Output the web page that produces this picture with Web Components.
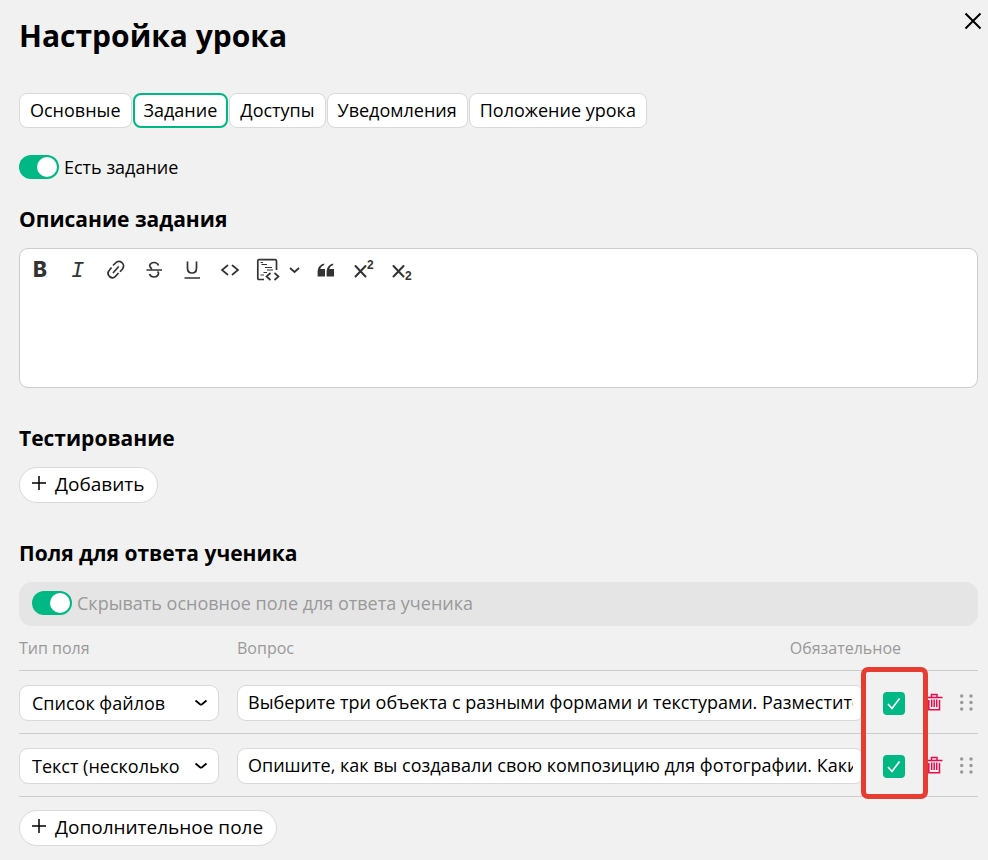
<!DOCTYPE html>
<html lang="ru">
  <head>
    <meta charset="UTF-8" />
    <meta name="viewport" content="width=device-width, initial-scale=1.0" />
    <title>Настройка урока</title>
    <style>
      :root {
        --green: #00b884;
        --border: #d9d9d9;
        --line: #cccccc;
        --muted: #999999;
        --danger: #eb0a4b;
      }
      body {
        margin: 0;
        background: #f1f1f1;
        color: #000;
        font: 18px/24px "Open Sans", "Noto Sans", sans-serif;
      }
    </style>
  </head>
  <body>
    <template id="lesson-settings">
      <style>
        :host {
          display: block;
          padding: 16px 10px 12px 19px;
        }
        header {
          display: flex;
          justify-content: space-between;
          align-items: flex-start;
        }
        h1 {
          margin: 0;
          font-size: 30px;
          line-height: 40px;
        }
        .close {
          margin: -4px -4px 0 0;
          padding: 0;
          width: 18px;
          height: 18px;
          border: 0;
          background: none;
          color: inherit;
        }
        .close svg {
          display: block;
        }
        lesson-tabs {
          margin-top: 37px;
        }
        .has-task {
          margin-top: 27px;
        }
        .more {
          margin-top: 13px;
        }
      </style>
      <header>
        <h1>Настройка урока</h1>
        <button class="close" type="button" aria-label="Закрыть">
          <svg width="18" height="18" viewBox="0 0 18 18" fill="none" stroke="currentColor" stroke-width="2">
            <path d="M1.5 1.5l15 15M16.5 1.5l-15 15" />
          </svg>
        </button>
      </header>
      <lesson-tabs active="1"></lesson-tabs>
      <toggle-switch class="has-task">Есть задание</toggle-switch>
      <form-section label="Описание задания">
        <text-editor></text-editor>
      </form-section>
      <form-section label="Тестирование" style="--space: 37px">
        <add-button>Добавить</add-button>
      </form-section>
      <form-section label="Поля для ответа ученика" style="--space: 37px">
        <toggle-switch panel>Скрывать основное поле для ответа ученика</toggle-switch>
        <answer-fields></answer-fields>
        <add-button class="more">Дополнительное поле</add-button>
      </form-section>
    </template>

    <template id="form-section">
      <style>
        :host {
          display: block;
          margin-top: var(--space, 27px);
        }
        h2 {
          margin: 0 0 16px;
          font-size: 21px;
          line-height: 26px;
        }
        ::slotted(.more) {
          margin-top: 13px;
        }
      </style>
      <h2></h2>
      <slot></slot>
    </template>

    <template id="lesson-tabs">
      <style>
        :host {
          display: block;
        }
        div {
          display: flex;
          flex-wrap: wrap;
          gap: 1px;
        }
        button {
          box-sizing: border-box;
          height: 35px;
          padding: 0 10px 1px;
          border: 1px solid var(--border);
          border-radius: 8px;
          background: #fff;
          color: inherit;
          font: inherit;
        }
        button[aria-selected="true"] {
          padding: 0 9px 1px;
          border: 2px solid var(--green);
        }
      </style>
      <div role="tablist"></div>
    </template>

    <template id="toggle-switch">
      <style>
        :host {
          display: flex;
        }
        :host([panel]) {
          padding: 9px 13px 11px;
          border-radius: 13px;
          background: #e5e5e5;
          color: var(--muted);
        }
        label {
          display: flex;
          align-items: center;
          gap: 5px;
        }
        input {
          appearance: none;
          box-sizing: border-box;
          display: flex;
          justify-content: flex-end;
          margin: 0;
          width: 40px;
          height: 24px;
          padding: 2px;
          border-radius: 12px;
          background: var(--green);
        }
        input::before {
          content: "";
          width: 20px;
          height: 20px;
          border-radius: 50%;
          background: #fff;
        }
        input:not(:checked) {
          justify-content: flex-start;
          background: #bbb;
        }
      </style>
      <label><input type="checkbox" role="switch" checked /><slot></slot></label>
    </template>

    <template id="text-editor">
      <style>
        :host {
          display: block;
          border: 1px solid var(--line);
          border-radius: 9px;
          background: #fff;
          color: #333;
        }
        .toolbar {
          display: flex;
          padding: 2px 1px 0;
        }
        button {
          display: flex;
          align-items: center;
          justify-content: center;
          width: 38px;
          height: 38px;
          padding: 0;
          border: 0;
          background: none;
          color: inherit;
        }
        button.arrow {
          justify-content: flex-start;
          width: 20px;
        }
        svg {
          fill: none;
          stroke: currentColor;
          stroke-width: 1.7;
          overflow: visible;
        }
        text {
          fill: currentColor;
          stroke: none;
          font-family: "Liberation Sans", sans-serif;
        }
        .bold {
          font: 800 21px Inter, sans-serif;
        }
        .italic {
          font: italic 22px "Liberation Mono", monospace;
        }
        .solid {
          fill: currentColor;
          stroke: none;
        }
        textarea {
          display: block;
          box-sizing: border-box;
          width: 100%;
          height: 98px;
          padding: 8px 12px;
          border: 0;
          border-radius: 9px;
          outline: 0;
          resize: none;
          background: none;
          color: inherit;
          font: inherit;
        }
      </style>
      <div class="toolbar" role="toolbar" aria-label="Форматирование">
        <button type="button" aria-label="Жирный">
          <svg width="22" height="22"><text class="bold" x="4" y="18">B</text></svg>
        </button>
        <button type="button" aria-label="Курсив">
          <svg width="22" height="22"><text class="italic" x="4" y="18">I</text></svg>
        </button>
        <button type="button" aria-label="Ссылка">
          <svg width="22" height="22" viewBox="0 0 22 22">
            <path d="M8 6.5L10.5 4Q13.5 1 16.8 3.5Q20 6.5 17.5 10L15 12.8M13.5 14L11 16.8Q8 20.500 4.500 17.500Q1.500 14.500 4.500 11L6.500 8.500M8 14L13.700 7.500" />
          </svg>
        </button>
        <button type="button" aria-label="Зачёркнутый">
          <svg width="22" height="22" viewBox="0 0 22 22">
            <path d="M15.5 6.5Q14.5 3.500 11 3.500T6.700 6.500Q6.700 8.500 9 9.700M14.500 12.500Q15.800 13.500 15.500 15Q14.500 18 11 18T6.500 15M3.500 11H19" />
          </svg>
        </button>
        <button type="button" aria-label="Подчёркнутый">
          <svg width="22" height="22" viewBox="0 0 22 22">
            <path d="M6.5 2.5V9Q6.5 14 11 14T15.500 9V2.500M3.500 19H19" />
          </svg>
        </button>
        <button type="button" aria-label="Код">
          <svg width="22" height="22" viewBox="0 0 22 22" stroke-linecap="round">
            <path d="M8.5 6.5L3 11L8.5 15.5M13.5 6.5L19 11L13.5 15.5" />
          </svg>
        </button>
        <button type="button" aria-label="Блок кода">
          <svg width="26" height="26" viewBox="0 0 26 26">
            <path d="M9 22.5H4Q2.800 22.500 2.800 21V4Q2.800 2.600 4 2.600H20Q21.500 2.600 21.500 4V13" />
            <path d="M15.5 16L11.5 19.500L15.500 23M19.500 16L23.500 19.500L19.500 23" />
            <path d="M5.5 5.500H8M6.500 7.500H12M10 10.500H17M12 13H18M8.500 15.500H12M5.500 18H9" stroke-width="1.2" />
          </svg>
        </button>
        <button class="arrow" type="button" aria-label="Язык кода">
          <svg width="14" height="14" viewBox="0 0 14 14"><path d="M3 5L7.5 9L12 5" /></svg>
        </button>
        <button type="button" aria-label="Цитата">
          <svg width="22" height="22" viewBox="0 0 22 22">
            <path class="solid" d="M9.2 4.500V6Q6 7 5.200 10H10V17.500H2.600V12Q3 6 9.200 4.500ZM18.200 4.500V6Q15 7 14.200 10H19V17.500H11.600V12Q12 6 18.200 4.500Z" />
          </svg>
        </button>
        <button type="button" aria-label="Надстрочный">
          <svg width="22" height="22" viewBox="0 0 22 22">
            <path d="M2.5 7L12.500 17.500M12.500 7L2.500 17.500" stroke-width="2" stroke-linecap="round" />
            <text x="14" y="10" font-size="12" font-weight="700">2</text>
          </svg>
        </button>
        <button type="button" aria-label="Подстрочный">
          <svg width="22" height="22" viewBox="0 0 22 22">
            <path d="M2.5 7L12.500 17.500M12.500 7L2.500 17.500" stroke-width="2" stroke-linecap="round" />
            <text x="14" y="21" font-size="12" font-weight="700">2</text>
          </svg>
        </button>
      </div>
      <textarea aria-label="Описание задания"></textarea>
    </template>

    <template id="add-button">
      <style>
        :host {
          display: flex;
        }
        button {
          display: flex;
          align-items: center;
          gap: 9px;
          height: 36px;
          padding: 0 13px 2px 12px;
          border: 1px solid var(--border);
          border-radius: 18px;
          background: #fff;
          color: inherit;
          font: inherit;
          font-size: 19px;
        }
        svg {
          margin-bottom: 2px;
          stroke: currentColor;
          stroke-width: 1.5;
        }
      </style>
      <button type="button">
        <svg width="14" height="14" viewBox="0 0 14 14"><path d="M0 7H14M7 0V14" /></svg>
        <slot></slot>
      </button>
    </template>

    <template id="field-select">
      <style>
        :host {
          display: grid;
          align-items: center;
        }
        select,
        svg {
          grid-area: 1 / 1;
        }
        select {
          appearance: none;
          width: 100%;
          height: 36px;
          padding: 0 36px 1px 12px;
          border: 1px solid var(--border);
          border-radius: 9px;
          background: #fff;
          color: inherit;
          font: inherit;
        }
        svg {
          justify-self: end;
          margin-right: 11px;
          fill: none;
          stroke: currentColor;
          stroke-width: 1.8;
          pointer-events: none;
        }
      </style>
      <select aria-label="Тип поля"></select>
      <svg width="14" height="14" viewBox="0 0 14 14"><path d="M1.5 4.500L6 8.300Q7 9 8 8.300L12.500 4.500" /></svg>
    </template>

    <template id="tick-box">
      <style>
        :host {
          display: grid;
          justify-content: start;
        }
        input,
        svg {
          grid-area: 1 / 1;
        }
        input {
          appearance: none;
          margin: 0;
          width: 22px;
          height: 23px;
          border-radius: 4px;
          background: #bbb;
        }
        input:checked {
          background: var(--green);
        }
        svg {
          fill: none;
          stroke: #fff;
          stroke-width: 1.7;
          pointer-events: none;
        }
      </style>
      <input type="checkbox" aria-label="Обязательное" checked />
      <svg width="22" height="23" viewBox="0 0 22 23"><path d="M5 12L9 16.5L16.5 6.5" /></svg>
    </template>

    <template id="answer-fields">
      <style>
        :host {
          display: block;
          position: relative;
        }
        table {
          width: 100%;
          table-layout: fixed;
          border-collapse: separate;
          border-spacing: 0;
        }
        th,
        td {
          padding: 0;
          border-bottom: 1px solid var(--line);
          text-align: left;
        }
        th {
          height: 44px;
          color: var(--muted);
          font-size: 16px;
          font-weight: 400;
        }
        th:last-of-type {
          padding-right: 77px;
          text-align: right;
        }
        td {
          padding: 14px 0 12px;
        }
        td:first-child {
          padding-right: 18px;
        }
        td.check {
          padding-left: 19px;
        }
        td.icon {
          padding-left: 8px;
        }
        td input {
          display: block;
          box-sizing: border-box;
          width: 100%;
          height: 36px;
          padding: 0 10px 2px;
          border: 1px solid var(--border);
          border-radius: 9px;
          background: #fff;
          color: inherit;
          font: inherit;
        }
        button {
          display: block;
          padding: 0;
          border: 0;
          background: none;
          color: var(--muted);
        }
        button.remove {
          color: var(--danger);
        }
        button svg {
          display: block;
          fill: none;
          stroke: currentColor;
          stroke-width: 1.5;
        }
        .drag svg {
          fill: currentColor;
          stroke: none;
        }
        /* frame around the "required" column */
        .highlight {
          position: absolute;
          top: 41px;
          right: 50px;
          bottom: -2px;
          box-sizing: border-box;
          width: 67px;
          border: 5px solid #e63c32;
          border-radius: 7px;
          pointer-events: none;
        }
      </style>
      <table>
        <colgroup>
          <col style="width: 218px" />
          <col />
          <col style="width: 110px" />
          <col style="width: 54px" />
          <col style="width: 34px" />
          <col style="width: 26px" />
        </colgroup>
        <thead>
          <tr>
            <th>Тип поля</th>
            <th>Вопрос</th>
            <th colspan="4">Обязательное</th>
          </tr>
        </thead>
        <tbody></tbody>
      </table>
      <div class="highlight"></div>
    </template>

    <script>
      class BaseElement extends HTMLElement {
        constructor() {
          super()
          const template = document.querySelector("#" + this.localName)
          this.root = this.attachShadow({ mode: "open" })
          this.root.appendChild(template.content.cloneNode(true))
        }
      }

      customElements.define("add-button", class extends BaseElement {})
      customElements.define("toggle-switch", class extends BaseElement {})
      customElements.define("tick-box", class extends BaseElement {})
      customElements.define("text-editor", class extends BaseElement {})

      customElements.define(
        "field-select",
        class extends BaseElement {
          connectedCallback() {
            const option = document.createElement("option")
            option.textContent = this.getAttribute("value")
            this.root.querySelector("select").replaceChildren(option)
          }
        }
      )

      customElements.define(
        "form-section",
        class extends BaseElement {
          connectedCallback() {
            this.root.querySelector("h2").textContent = this.getAttribute("label")
          }
        }
      )

      customElements.define(
        "lesson-tabs",
        class extends BaseElement {
          connectedCallback() {
            const list = this.root.querySelector("div")
            const names = ["Основные", "Задание", "Доступы", "Уведомления", "Положение урока"]
            const buttons = names.map((name, i) => {
              const button = document.createElement("button")
              button.type = "button"
              button.setAttribute("role", "tab")
              button.setAttribute("aria-selected", i === Number(this.getAttribute("active")))
              button.textContent = name
              button.addEventListener("click", () => {
                buttons.forEach((b) => b.setAttribute("aria-selected", b === button))
              })
              return button
            })
            list.replaceChildren(...buttons)
          }
        }
      )

      const fields = [
        {
          type: "Список файлов",
          question: "Выберите три объекта с разными формами и текстурами. Разместите"
        },
        {
          type: "Текст (несколько",
          question: "Опишите, как вы создавали свою композицию для фотографии. Какие"
        }
      ]

      customElements.define(
        "answer-fields",
        class extends BaseElement {
          connectedCallback() {
            this.root.querySelector("tbody").innerHTML = fields
              .map(
                (field) => `
                <tr>
                  <td><field-select value="${field.type}"></field-select></td>
                  <td colspan="2"><input type="text" aria-label="Вопрос" value="${field.question}" /></td>
                  <td class="check"><tick-box></tick-box></td>
                  <td class="icon">
                    <button class="remove" type="button" aria-label="Удалить">
                      <svg width="17" height="20" viewBox="0 0 17 20">
                        <path d="M0 4.5H16.5M5.500 4.500V1.500H11V4.500M2.800 7V16.800H13.500V7M5.700 6.500V14M8.200 6.500V14M10.700 6.500V14" />
                      </svg>
                    </button>
                  </td>
                  <td class="icon">
                    <button class="drag" type="button" aria-label="Переместить">
                      <svg width="13" height="18" viewBox="0 0 13 18">
                        <circle cx="1.7" cy="2" r="1.7" /><circle cx="11" cy="2" r="1.7" />
                        <circle cx="1.7" cy="8.5" r="1.7" /><circle cx="11" cy="8.5" r="1.7" />
                        <circle cx="1.7" cy="15" r="1.7" /><circle cx="11" cy="15" r="1.7" />
                      </svg>
                    </button>
                  </td>
                </tr>`
              )
              .join("")
          }
        }
      )

      customElements.define("lesson-settings", class extends BaseElement {})
    </script>

    <lesson-settings></lesson-settings>
  </body>
</html>
